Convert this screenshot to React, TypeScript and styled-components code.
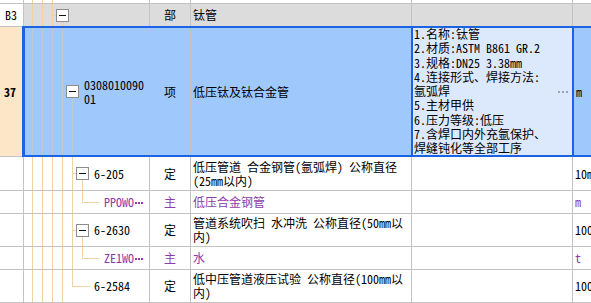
import React from 'react';
import styled, { createGlobalStyle, css } from 'styled-components';

const Global = createGlobalStyle`
  html, body { margin: 0; padding: 0; background: #fff; }
  body {
    font-family: "Noto Sans Mono CJK SC", "Noto Sans CJK SC", "Liberation Mono", monospace;
    font-size: 12px;
    color: #000;
  }
  * { box-sizing: border-box; }
`;

const COLS = '24px 126px 41px 221px 161px 1fr';
const GRID = '#c3c3c3';
const SEL = '#1a63e2';
const PURPLE = '#8e3aa8';

type Tone = 'plain' | 'group' | 'selected';

const rowBg = (t: Tone) => (t === 'group' ? '#dcdcdc' : t === 'selected' ? '#9fc8fc' : '#ffffff');
const guideColor = (t: Tone) => (t === 'selected' ? '#c3c9d2' : '#f1d2a2');

const Sheet = styled.div`
  width: 591px;
  height: 303px;
  overflow: hidden;
  display: flex;
  flex-direction: column;
`;

const Row = styled.div<{ $h: number; $tone: Tone }>`
  position: relative;
  flex: none;
  display: grid;
  grid-template-columns: ${COLS};
  height: ${(p) => p.$h}px;
  border-bottom: 1px solid ${GRID};
  background: ${(p) => rowBg(p.$tone)};
  ${(p) =>
    p.$tone === 'selected' &&
    css`
      &::after {
        content: '';
        position: absolute;
        left: 22px;
        right: -4px;
        top: -1px;
        bottom: -1px;
        border: 2px solid ${SEL};
        border-left-width: 3px;
        pointer-events: none;
      }
    `}
`;

const Cell = styled.div`
  position: relative;
  display: flex;
  align-items: center;
  min-width: 0;
  border-right: 1px solid ${GRID};
  overflow: hidden;
  line-height: 14px;
  white-space: nowrap;
`;

const HeadCell = styled(Cell)<{ $active: boolean }>`
  padding-left: ${(p) => (p.$active ? 4 : 5)}px;
  background: ${(p) => (p.$active ? '#fde5c7' : '#ffffff')};
  font-weight: ${(p) => (p.$active ? 700 : 400)};
`;

const TreeCell = styled(Cell)<{ $indent: number }>`
  padding-left: ${(p) => p.$indent}px;
`;

const TypeCell = styled(Cell)`
  justify-content: center;
`;

const NameCell = styled(Cell)`
  padding-left: 2px;
`;

const FeatureCell = styled(Cell)<{ $active: boolean }>`
  align-items: flex-start;
  padding-left: 2px;
  ${(p) =>
    p.$active &&
    css`
      background: #dce9fc;
      outline: 2px solid ${SEL};
      outline-offset: -1px;
      line-height: 14.25px;
    `}
`;

const UnitCell = styled(Cell)<{ $active: boolean }>`
  padding-left: ${(p) => (p.$active ? 3 : 2)}px;
  border-right: none;
`;

const Ink = styled.span<{ $purple?: boolean }>`
  position: relative;
  color: ${(p) => (p.$purple ? PURPLE : '#000')};
`;

const CodeLabel = styled.span<{ $purple?: boolean }>`
  position: relative;
  display: flex;
  align-items: center;
  color: ${(p) => (p.$purple ? PURPLE : '#000')};
`;

const Ellipsis = styled.span<{ $color: string }>`
  display: flex;
  gap: 1px;
  margin-left: 1px;
  margin-top: 1px;
  & > i {
    width: 2px;
    height: 2px;
    background: ${(p) => p.$color};
  }
`;

const Toggle = styled.span`
  position: relative;
  flex: none;
  width: 13px;
  height: 13px;
  margin-right: 5px;
  border: 1px solid #8c8c8c;
  background: #fff;
  display: flex;
  align-items: center;
  justify-content: center;
  &::before {
    content: '';
    width: 7px;
    height: 1px;
    background: #111;
  }
`;

const GuideSvg = styled.svg`
  position: absolute;
  left: 0;
  top: 0;
  width: 100%;
  height: 100%;
  pointer-events: none;
`;

const FeatureText = styled.div`
  position: relative;
`;

const Dots = styled.span`
  align-self: center;
  margin-left: auto;
  margin-right: 4px;
  display: flex;
  gap: 2px;
  & > i {
    width: 2px;
    height: 2px;
    background: #9aa6b8;
  }
`;

interface GuideSpec {
  full: number[];
  tick?: [number, number];
  drop?: number;
  hook?: [number, number];
}

const Guides: React.FC<{ spec: GuideSpec; h: number; tone: Tone }> = ({ spec, h, tone }) => {
  const H = h - 1;
  const cy = Math.floor(H / 2) + 0.5;
  const c = guideColor(tone);
  return (
    <GuideSvg shapeRendering="crispEdges">
      <g stroke={c} strokeWidth={1}>
        {spec.full.map((x) => (
          <line key={x} x1={x + 0.5} y1={0} x2={x + 0.5} y2={H} />
        ))}
        {spec.tick && <line x1={spec.tick[0]} y1={cy} x2={spec.tick[1]} y2={cy} />}
        {spec.drop !== undefined && (
          <line x1={spec.drop + 0.5} y1={cy} x2={spec.drop + 0.5} y2={H} />
        )}
        {spec.hook && (
          <>
            <line x1={spec.hook[0] + 0.5} y1={0} x2={spec.hook[0] + 0.5} y2={cy} />
            <line x1={spec.hook[0]} y1={cy} x2={spec.hook[1]} y2={cy} />
          </>
        )}
      </g>
    </GuideSvg>
  );
};

interface RowData {
  id: string;
  h: number;
  tone: Tone;
  head?: string;
  indent?: number;
  toggle?: boolean;
  code?: string[];
  truncated?: boolean;
  purple?: boolean;
  type?: string;
  name?: string[];
  features?: string[];
  unit?: string;
  guides: GuideSpec;
}

const childGuides: GuideSpec = { full: [8, 18, 28, 38, 48], tick: [48, 52], drop: 58 };
const leafGuides: GuideSpec = { full: [8, 18, 28, 38, 48], hook: [58, 75] };

const rows: RowData[] = [
  { id: 'strip', h: 4, tone: 'plain', guides: { full: [8, 18, 28] } },
  {
    id: 'b3',
    h: 23,
    tone: 'group',
    head: 'B3',
    indent: 32,
    toggle: true,
    type: '部',
    name: ['钛管'],
    guides: { full: [8, 18, 28], tick: [28, 32], drop: 38 },
  },
  {
    id: '37',
    h: 130,
    tone: 'selected',
    head: '37',
    indent: 42,
    toggle: true,
    code: ['0308010090', '01'],
    type: '项',
    name: ['低压钛及钛合金管'],
    features: [
      '1.名称:钛管',
      '2.材质:ASTM B861 GR.2',
      '3.规格:DN25 3.38mm',
      '4.连接形式、焊接方法:',
      '氩弧焊',
      '5.主材甲供',
      '6.压力等级:低压',
      '7.含焊口内外充氩保护、',
      '焊缝钝化等全部工序',
    ],
    unit: 'm',
    guides: { full: [8, 18, 28, 38], tick: [38, 42], drop: 48 },
  },
  {
    id: '6-205',
    h: 34,
    tone: 'plain',
    indent: 52,
    toggle: true,
    code: ['6-205'],
    type: '定',
    name: ['低压管道 合金钢管(氩弧焊) 公称直径', '(25mm以内)'],
    unit: '10m',
    guides: childGuides,
  },
  {
    id: 'ppowo',
    h: 23,
    tone: 'plain',
    indent: 80,
    code: ['PPOWO'],
    truncated: true,
    purple: true,
    type: '主',
    name: ['低压合金钢管'],
    unit: 'm',
    guides: leafGuides,
  },
  {
    id: '6-2630',
    h: 33,
    tone: 'plain',
    indent: 52,
    toggle: true,
    code: ['6-2630'],
    type: '定',
    name: ['管道系统吹扫 水冲洗 公称直径(50mm以', '内)'],
    unit: '100',
    guides: childGuides,
  },
  {
    id: 'ze1wo',
    h: 23,
    tone: 'plain',
    indent: 80,
    code: ['ZE1WO'],
    truncated: true,
    purple: true,
    type: '主',
    name: ['水'],
    unit: 't',
    guides: leafGuides,
  },
  {
    id: '6-2584',
    h: 33,
    tone: 'plain',
    indent: 70,
    code: ['6-2584'],
    type: '定',
    name: ['低中压管道液压试验 公称直径(100mm以', '内)'],
    unit: '100',
    guides: { full: [8, 18, 28, 38], hook: [48, 66] },
  },
];

const Lines: React.FC<{ lines?: string[] }> = ({ lines }) => (
  <>
    {(lines ?? []).map((l, i) => (
      <React.Fragment key={i}>
        {i > 0 && <br />}
        {l}
      </React.Fragment>
    ))}
  </>
);

export default function App() {
  return (
    <>
      <Global />
      <Sheet>
        {rows.map((r) => {
          const active = r.tone === 'selected';
          return (
            <Row key={r.id} $h={r.h} $tone={r.tone}>
              <HeadCell $active={active}>{r.head}</HeadCell>
              <TreeCell $indent={r.indent ?? 0}>
                <Guides spec={r.guides} h={r.h} tone={r.tone} />
                {r.toggle && <Toggle />}
                {r.code && (
                  <CodeLabel $purple={r.purple}>
                    <span>
                      <Lines lines={r.code} />
                    </span>
                    {r.truncated && (
                      <Ellipsis $color={r.purple ? PURPLE : '#000'}>
                        <i />
                        <i />
                        <i />
                      </Ellipsis>
                    )}
                  </CodeLabel>
                )}
              </TreeCell>
              <TypeCell>
                <Ink $purple={r.purple}>{r.type}</Ink>
              </TypeCell>
              <NameCell>
                <Ink $purple={r.purple}>
                  <Lines lines={r.name} />
                </Ink>
              </NameCell>
              <FeatureCell $active={active}>
                {r.features && (
                  <>
                    <FeatureText>
                      <Lines lines={r.features} />
                    </FeatureText>
                    <Dots>
                      <i />
                      <i />
                      <i />
                    </Dots>
                  </>
                )}
              </FeatureCell>
              <UnitCell $active={active}>
                <Ink $purple={r.purple}>{r.unit}</Ink>
              </UnitCell>
            </Row>
          );
        })}
      </Sheet>
    </>
  );
}
